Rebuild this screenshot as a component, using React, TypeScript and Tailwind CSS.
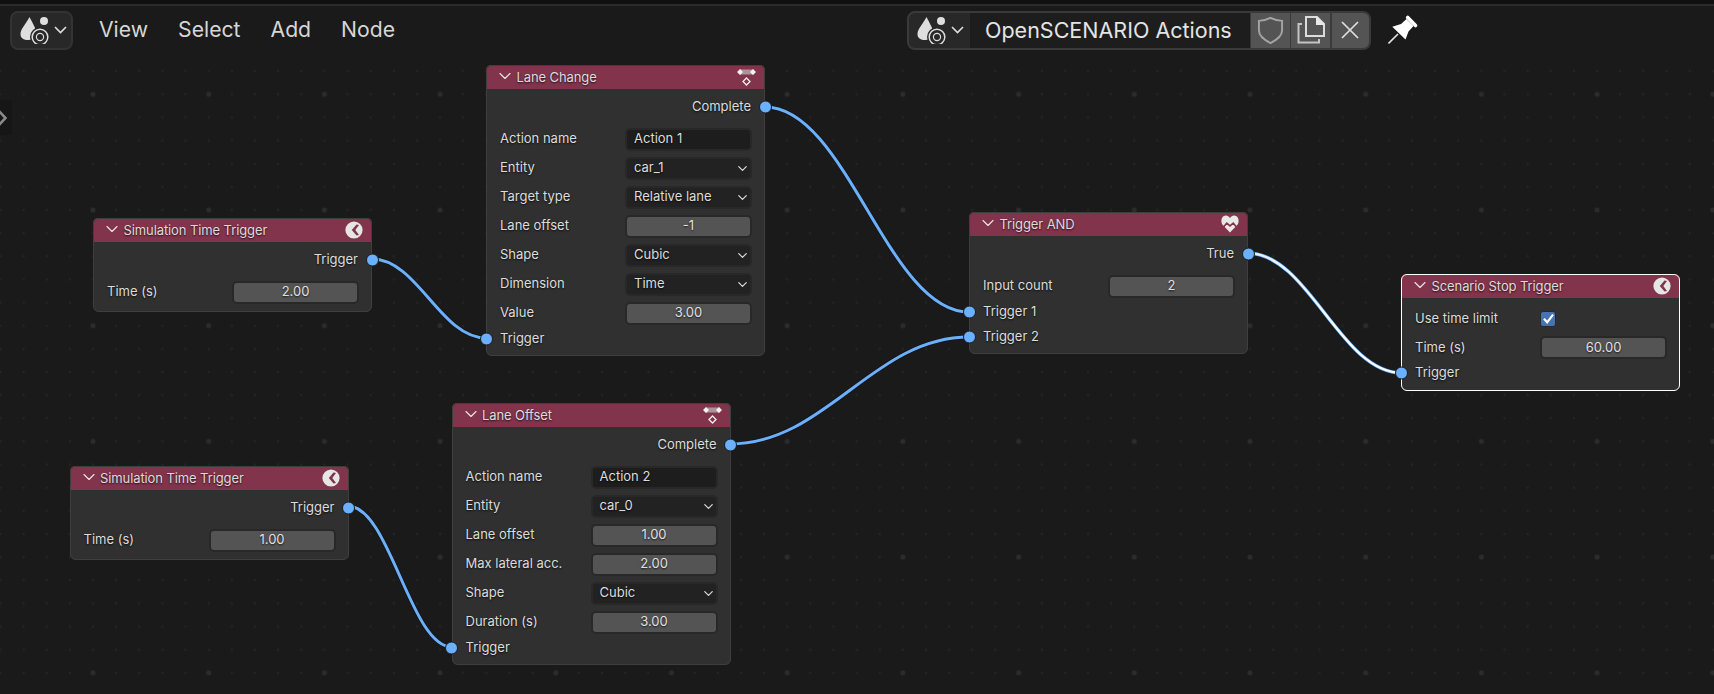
import type { ReactNode } from 'react';
import { ChevronDown } from 'lucide-react';

const EditorIcon = () => (
  <svg width="30" height="28" viewBox="0 0 30 28" className="shrink-0">
    <path d="M9.500 1 C12.500 7 16 12 16 17 C16 21 13.500 24 8.500 24 C3.500 24 0.500 22 0.500 18 C0.500 13 6.500 7 9.500 1 Z" fill="#dedede" />
    <circle cx="24" cy="5" r="4" fill="#dedede" />
    <circle cx="20" cy="21" r="10" fill="#282828" />
    <circle cx="20" cy="21" r="7.800" fill="none" stroke="#dedede" strokeWidth="1.500" />
    <circle cx="20" cy="21" r="3.600" fill="none" stroke="#dedede" strokeWidth="1.200" />
  </svg>
);

const MenuChevron = () => (
  <svg width="13" height="8" viewBox="0 0 13 8" className="ml-[4px] shrink-0">
    <path d="M1 1 L6.500 6.500 L12 1" fill="none" stroke="#dedede" strokeWidth="1.600" />
  </svg>
);

const PinIcon = () => (
  <svg width="30" height="30" viewBox="0 0 30 30">
    <path d="M4.300 11.700 L13 9 L18.500 4 L25.500 11 L20.500 16.500 L17.500 24.500 Z" fill="#fff" />
    <path d="M19.700 2.500 L27.500 10.500" stroke="#fff" strokeWidth="3.600" strokeLinecap="round" />
    <path d="M0.500 28.500 L10 19" stroke="#e4e4e4" strokeWidth="1.600" />
  </svg>
);

const TimeIcon = () => (
  <svg width="18" height="18" viewBox="0 0 18 18">
    <circle cx="9" cy="9" r="8.600" fill="#e6e6e6" />
    <path d="M11.500 3.500 L6.800 9 L11.500 14.500 L14 14 L10.300 9 L14 4 Z" fill="#83344d" />
  </svg>
);

const ActionIcon = () => (
  <svg width="20" height="18" viewBox="0 0 20 18" className="mr-[-1px]">
    <rect x="3" y="1.500" width="13" height="5" fill="#ad919b" />
    <path d="M3 1 L6 4 L3 7 L0 4 Z M16 1 L19 4 L16 7 L13 4 Z" fill="#f2f2f2" />
    <path d="M9.500 10 L13 13.500 L9.500 17 L6 13.500 Z" fill="none" stroke="#eeeeee" strokeWidth="1.300" />
  </svg>
);

const HeartIcon = () => (
  <svg width="18" height="18" viewBox="0 0 18 18">
    <path d="M9 17.500 L1.800 10 C-0.300 7.500 0 3 2.500 1.300 C5 -0.200 7.500 0.700 9 3 C10.500 0.700 13 -0.200 15.500 1.300 C18 3 18.300 7.500 16.200 10 Z" fill="#e8e8e8" />
    <path d="M2.500 12 L5.800 8.200 L9 10.800 L12.200 8.200 L15.500 12" fill="none" stroke="#83344d" strokeWidth="1.700" />
  </svg>
);

const Socket = ({ side }: { side: 'left' | 'right' }) => (
  <span
    className={
      side === 'left'
        ? 'absolute left-[-6.500px] top-1/2 h-[13px] w-[13px] -translate-y-1/2 rounded-full border border-[#1c1c1c] bg-[#6bb0ff]'
        : 'absolute right-[-6.500px] top-1/2 h-[13px] w-[13px] -translate-y-1/2 rounded-full border border-[#1c1c1c] bg-[#6bb0ff]'
    }
  />
);

const Output = ({ label }: { label: string }) => (
  <div className="relative mb-[3.500px] flex h-[29px] items-center justify-end pr-[14px]">
    {label}
    <Socket side="right" />
  </div>
);

const Input = ({ label }: { label: string }) => (
  <div className="relative -mt-[1.500px] flex h-[25px] items-center pl-[14px]">
    {label}
    <Socket side="left" />
  </div>
);

const Row = ({ label, children }: { label: string; children: ReactNode }) => (
  <div className="flex h-[29px] items-center justify-between pl-[14px] pr-[13px]">
    <span>{label}</span>
    {children}
  </div>
);

const fieldBase = 'flex h-[23px] w-[127px] items-center rounded-[5px] border-2 border-[#282828]';

const TextField = ({ value }: { value: string }) => (
  <div className={`${fieldBase} bg-[#1d1d1d] pl-[7px]`}>{value}</div>
);

const Dropdown = ({ value }: { value: string }) => (
  <div className={`${fieldBase} justify-between bg-[#222222] pl-[7px]`}>
    {value}
    <ChevronDown size={15} strokeWidth={2} color="#d8d8d8" />
  </div>
);

const NumberField = ({ value }: { value: string }) => (
  <div className={`${fieldBase} justify-center bg-[#545454] text-[#e0e0e0]`}>{value}</div>
);

const Checkbox = () => (
  <div className="mr-[111px] flex h-[16px] w-[16px] items-center justify-center rounded-[3px] border border-[#282828] bg-[#4772b3]">
    <svg width="13" height="13" viewBox="0 0 12 12">
      <path d="M1.800 6.200 L4.800 9.500 L10.200 2.500" fill="none" stroke="#fff" strokeWidth="2" />
    </svg>
  </div>
);

type NodeProps = {
  title: string;
  icon: ReactNode;
  className: string;
  selected?: boolean;
  children: ReactNode;
};

const GraphNode = ({ title, icon, className, selected, children }: NodeProps) => (
  <div
    className={`absolute w-[279px] rounded-[6px] bg-[#303030] text-[13px] text-[#dcdcdc] [text-shadow:0_1px_2px_rgba(0,0,0,0.75)] ${
      selected ? 'outline-[1.500px] -outline-offset-1 outline-white' : 'outline-1 -outline-offset-1 outline-[#3e3e3e]'
    } ${className}`}
  >
    <div className="flex h-[24px] items-center rounded-t-[5px] bg-[#83344d] pl-[9px] pr-[9px]">
      <ChevronDown size={20} strokeWidth={1.400} color="#e4e4e4" className="mr-[1.500px] -mt-[3px] shrink-0" />
      <span className="mt-[2px] tracking-[-0.1px]">{title}</span>
      <span className="ml-auto flex items-center">{icon}</span>
    </div>
    <div className="pb-[5px]">{children}</div>
  </div>
);

// bezier between two sockets, handles run out horizontally
const wirePath = (x1: number, y1: number, x2: number, y2: number) => {
  const h = (x2 - x1) * 0.4;
  return `M${x1} ${y1} C${x1 + h} ${y1} ${x2 - h} ${y2} ${x2} ${y2}`;
};

const wires = [
  [372, 259, 486, 338],
  [765, 107, 969, 312],
  [730, 444, 969, 337],
  [348, 506, 452, 647],
];

const Canvas = () => (
  <svg width="1714" height="694" className="absolute left-0 top-0">
    <defs>
      <pattern id="minor" width="23.14" height="23.14" patternUnits="userSpaceOnUse" x="0.44" y="1.74">
        <circle cx="0" cy="0" r="1.200" fill="#242424" />
        <circle cx="23.14" cy="0" r="1.200" fill="#242424" />
        <circle cx="0" cy="23.14" r="1.200" fill="#242424" />
        <circle cx="23.14" cy="23.14" r="1.200" fill="#242424" />
      </pattern>
      <pattern id="major" width="115.7" height="115.7" patternUnits="userSpaceOnUse" x="93" y="94.300">
        <circle cx="0" cy="0" r="2.500" fill="#2c2c2c" />
        <circle cx="115.700" cy="0" r="2.500" fill="#2c2c2c" />
        <circle cx="0" cy="115.700" r="2.500" fill="#2c2c2c" />
        <circle cx="115.700" cy="115.700" r="2.500" fill="#2c2c2c" />
      </pattern>
      <linearGradient id="selectedWire" gradientUnits="userSpaceOnUse" x1="1247" y1="253" x2="1402" y2="373">
        <stop offset="0" stopColor="#e8f2ff" />
        <stop offset="1" stopColor="#ffffff" />
      </linearGradient>
    </defs>
    <rect y="60" width="1714" height="634" fill="url(#minor)" />
    <rect y="60" width="1714" height="634" fill="url(#major)" />
    {wires.map(([x1, y1, x2, y2]) => (
      <g key={`${x1}-${y1}`} fill="none">
        <path d={wirePath(x1, y1, x2, y2)} stroke="#141414" strokeWidth="4.400" />
        <path d={wirePath(x1, y1, x2, y2)} stroke="#6bb0ff" strokeWidth="3" />
      </g>
    ))}
    <g fill="none">
      <path d={wirePath(1247, 253, 1402, 373)} stroke="#6bb0ff" strokeWidth="3.600" />
      <path d={wirePath(1247, 253, 1402, 373)} stroke="url(#selectedWire)" strokeWidth="2.200" />
    </g>
  </svg>
);

const TopBar = () => (
  <div className="relative">
    <div className="h-[4px] bg-[#101010]" />
    <div className="h-[1.500px] bg-[#2b2b2b]" />
    <div className="flex items-center pl-[10px] pt-[5px] text-[21.200px] text-[#d6d6d6]">
      <div className="flex h-[39px] w-[63px] items-center rounded-[8px] border-2 border-[#333333] bg-[#282828] pl-[8px]">
        <EditorIcon />
        <MenuChevron />
      </div>
      <div className="ml-[26px] flex gap-[30px]">
        <span>View</span>
        <span>Select</span>
        <span>Add</span>
        <span>Node</span>
      </div>
      <div className="ml-auto flex h-[39px] w-[464px] items-stretch overflow-hidden rounded-[8px] border-2 border-[#3a3a3a] bg-[#3a3a3a] text-[21.500px]">
        <div className="flex w-[61px] items-center bg-[#282828] pl-[8px]">
          <EditorIcon />
          <MenuChevron />
        </div>
        <div className="flex w-[280px] items-center bg-[#1d1d1d] pl-[15px] text-[#e4e4e4]">OpenSCENARIO Actions</div>
        <div className="ml-[1px] flex w-[39px] items-center justify-center bg-[#545454]">
          <svg width="27" height="29" viewBox="0 0 28 30">
            <path d="M14 2 C18 4 22 5 26 5 V15 C26 21 20 25 14 28 C8 25 2 21 2 15 V5 C6 5 10 4 14 2 Z" fill="none" stroke="#a4a4a4" strokeWidth="2" />
          </svg>
        </div>
        <div className="ml-[1px] flex w-[39px] items-center justify-center bg-[#545454]">
          <svg width="28" height="28" viewBox="0 0 28 28">
            <path d="M5 8 H1.500 V26.500 H22 V23" fill="none" stroke="#c4c4c4" strokeWidth="2" />
            <path d="M9 1 H20 L27 8 V20 H9 Z" fill="none" stroke="#dcdcdc" strokeWidth="2" />
            <path d="M19 0 L28 9 H19 Z" fill="#e8e8e8" />
          </svg>
        </div>
        <div className="ml-[1.500px] flex flex-1 items-center justify-center bg-[#545454]">
          <svg width="18" height="18" viewBox="0 0 18 18">
            <path d="M1 1 L17 17 M17 1 L1 17" stroke="#e0e0e0" strokeWidth="1.700" />
          </svg>
        </div>
      </div>
      <div className="ml-[17px] mr-[296px] flex w-[30px] items-center">
        <PinIcon />
      </div>
    </div>
  </div>
);

export default function App() {
  return (
    <div className="relative h-[694px] w-[1714px] overflow-hidden bg-[#1a1a1a] font-['Inter',sans-serif]">
      <Canvas />
      <TopBar />

      <div className="absolute left-0 top-[100px] flex h-[35px] w-[12px] items-center bg-[#161616]">
        <svg width="8" height="16" viewBox="0 0 8 16">
          <path d="M-1 1 L5.500 8 L-1 15" fill="none" stroke="#8a8a8a" strokeWidth="2.600" />
        </svg>
      </div>

      <GraphNode title="Lane Change" icon={<ActionIcon />} className="left-[486px] top-[65px]">
        <div className="pt-[3px]">
          <Output label="Complete" />
          <Row label="Action name"><TextField value="Action 1" /></Row>
          <Row label="Entity"><Dropdown value="car_1" /></Row>
          <Row label="Target type"><Dropdown value="Relative lane" /></Row>
          <Row label="Lane offset"><NumberField value="-1" /></Row>
          <Row label="Shape"><Dropdown value="Cubic" /></Row>
          <Row label="Dimension"><Dropdown value="Time" /></Row>
          <Row label="Value"><NumberField value="3.00" /></Row>
          <Input label="Trigger" />
        </div>
      </GraphNode>

      <GraphNode title="Simulation Time Trigger" icon={<TimeIcon />} className="left-[93px] top-[218px]">
        <div className="pt-[3px]">
          <Output label="Trigger" />
          <Row label="Time (s)"><NumberField value="2.00" /></Row>
        </div>
      </GraphNode>

      <GraphNode title="Trigger AND" icon={<HeartIcon />} className="left-[969px] top-[212px]">
        <div className="pt-[3px]">
          <Output label="True" />
          <Row label="Input count"><NumberField value="2" /></Row>
          <Input label="Trigger 1" />
          <div className="h-[1.500px]" />
          <Input label="Trigger 2" />
        </div>
      </GraphNode>

      <GraphNode selected title="Scenario Stop Trigger" icon={<TimeIcon />} className="left-[1401px] top-[274px]">
        <div className="pt-[6px]">
          <Row label="Use time limit"><Checkbox /></Row>
          <Row label="Time (s)"><NumberField value="60.00" /></Row>
          <Input label="Trigger" />
        </div>
      </GraphNode>

      <GraphNode title="Lane Offset" icon={<ActionIcon />} className="left-[451.500px] top-[403px]">
        <div className="pt-[3px]">
          <Output label="Complete" />
          <Row label="Action name"><TextField value="Action 2" /></Row>
          <Row label="Entity"><Dropdown value="car_0" /></Row>
          <Row label="Lane offset"><NumberField value="1.00" /></Row>
          <Row label="Max lateral acc."><NumberField value="2.00" /></Row>
          <Row label="Shape"><Dropdown value="Cubic" /></Row>
          <Row label="Duration (s)"><NumberField value="3.00" /></Row>
          <Input label="Trigger" />
        </div>
      </GraphNode>

      <GraphNode title="Simulation Time Trigger" icon={<TimeIcon />} className="left-[69.500px] top-[466px]">
        <div className="pt-[3px]">
          <Output label="Trigger" />
          <Row label="Time (s)"><NumberField value="1.00" /></Row>
        </div>
      </GraphNode>
    </div>
  );
}
